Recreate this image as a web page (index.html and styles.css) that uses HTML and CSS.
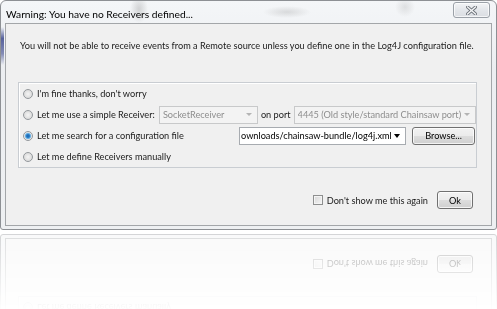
FILE: index.html
```html
<!DOCTYPE html>
<html>
<head>
<meta charset="utf-8">
<title>Warning</title>
<link rel="stylesheet" href="styles.css">
</head>
<body>
<div class="window">
  <div class="titlebar">
    <span class="title">Warning: You have no Receivers defined...</span>
    <button class="close" aria-label="Close">
      <svg width="11" height="9" viewBox="0 0 11 9">
        <path d="M1.5 1 L9.5 8 M9.5 1 L1.5 8" stroke="#6d737a" stroke-width="3.2" stroke-linecap="square" fill="none"/>
        <path d="M1.5 1 L9.5 8 M9.5 1 L1.5 8" stroke="#f4f5f6" stroke-width="1.4" stroke-linecap="square" fill="none"/>
      </svg>
    </button>
  </div>
  <div class="client">
    <p class="msg">You will not be able to receive events from a Remote source unless you define one in the Log4J configuration file.</p>
    <div class="group">
      <label class="row"><input type="radio" name="opt" class="radio"><span>I'm fine thanks, don't worry</span></label>
      <div class="row">
        <input type="radio" name="opt" class="radio"><span>Let me use a simple Receiver:</span>
        <div class="combo disabled receiver"><span class="val">SocketReceiver</span><span class="arrow"></span></div>
        <span class="onport">on port</span>
        <div class="combo disabled port"><span class="val">4445 (Old style/standard Chainsaw port)</span><span class="arrow"></span></div>
      </div>
      <div class="row">
        <input type="radio" name="opt" class="radio" checked><span>Let me search for a configuration file</span>
        <div class="combo file"><span class="val">ownloads/chainsaw-bundle/log4j.xml</span><span class="arrow"></span></div>
        <button class="btn browse">Browse...</button>
      </div>
      <label class="row"><input type="radio" name="opt" class="radio"><span>Let me define Receivers manually</span></label>
    </div>
    <div class="footer">
      <label class="check"><input type="checkbox" class="checkbox"><span>Don't show me this again</span></label>
      <button class="btn ok">Ok</button>
    </div>
  </div>
</div>
</body>
</html>
```

FILE: styles.css
```css
* { box-sizing: border-box; }
html, body { margin: 0; padding: 0; background: #ffffff; }
body {
  font-family: "Lato", "Open Sans", sans-serif;
  font-size: 9.2px;
  color: #1b1b1b;
  height: 309px;
  overflow: hidden;
}

.window {
  width: 497px;
  height: 230px;
  border: 1px solid #8d9094;
  border-radius: 6px 6px 3px 3px;
  padding: 0 4px 3px 4px;
  display: flex;
  flex-direction: column;
  background:
    radial-gradient(ellipse 9px 14px at 138px 8px, rgba(120,120,120,0.28), rgba(120,120,120,0) 100%),
    radial-gradient(ellipse 24px 6px at 286px 11px, rgba(120,120,120,0.22), rgba(120,120,120,0) 100%),
    radial-gradient(ellipse 10px 10px at 404px 6px, rgba(120,120,120,0.18), rgba(120,120,120,0) 100%),
    linear-gradient(to bottom, rgba(60,72,140,0), rgba(60,72,140,0.85) 30%, rgba(60,72,140,0.6) 70%, rgba(60,72,140,0)) 0 26px / 3px 38px no-repeat,
    linear-gradient(to bottom, #f4f6f8, #eceef1 30%, #eef0f2);
  -webkit-box-reflect: below 4px linear-gradient(to bottom, transparent 66%, rgba(255,255,255,0.38));
}

.titlebar {
  height: 22px;
  display: flex;
  align-items: flex-start;
  flex: none;
}
.title {
  padding: 6px 0 0 1px;
  line-height: 15px;
  font-size: 10.25px;
  color: #000;
}
.close {
  margin: 1px 2px 0 auto;
  width: 37px;
  height: 16px;
  border: 1px solid #9ba1a8;
  border-radius: 3px;
  background: linear-gradient(to bottom, #f3f4f6, #e3e6ea 50%, #dadde2);
  box-shadow: inset 0 0 0 1px rgba(255,255,255,0.7);
  display: flex;
  align-items: center;
  justify-content: center;
  padding: 0;
}

.client {
  flex: 1;
  border: 1px solid #a3a6a9;
  background: #f0f0f0;
  display: flex;
  flex-direction: column;
}

.msg {
  margin: 0;
  padding: 14px 0 0 14px;
  line-height: 15px;
  white-space: nowrap;
}

.group {
  margin: 29px 14px 0 12px;
  border: 1px solid #c9cdd2;
  box-shadow: inset 1px 1px 0 #ffffff;
  display: flex;
  flex-direction: column;
}
.row {
  height: 21px;
  display: flex;
  align-items: center;
  padding-left: 4px;
  white-space: nowrap;
}

.radio {
  appearance: none;
  -webkit-appearance: none;
  margin: 0 4px 0 0;
  width: 10px;
  height: 10px;
  border-radius: 50%;
  border: 1px solid #94989c;
  background: radial-gradient(circle at 50% 50%, #f4f4f4 0, #dcdcdc 70%, #e8e8e8 100%);
  flex: none;
}
.radio:checked {
  background: radial-gradient(circle at 50% 50%, #1f5fa6 0, #2a7fc8 1.6px, #7cbbe8 2.8px, #e8e8e8 3.6px, #f4f4f4 100%);
}

.combo {
  height: 18px;
  border: 1px solid #c8c9ca;
  display: flex;
  align-items: center;
  padding-left: 3px;
  background: #f3f3f3;
  overflow: hidden;
  flex: none;
}
.combo .val { flex: 1; overflow: hidden; white-space: nowrap; }
.combo .arrow {
  width: 0;
  height: 0;
  border-left: 3px solid transparent;
  border-right: 3px solid transparent;
  border-top: 3px solid #b4b4b4;
  margin: 0 5px 0 3px;
  flex: none;
}
.combo.disabled { color: #8e8e8e; }
.receiver { width: 99px; margin-left: 4px; }
.onport { margin: 0 3px 0 3px; }
.port { flex: 1; margin-right: 0; }

.combo.file {
  width: 167px;
  margin-left: auto;
  background: #ffffff;
  border-color: #a7abb0;
  color: #000;
  padding-left: 1px;
}
.combo.file .arrow {
  border-top: 4px solid #000;
  border-left-width: 3.5px;
  border-right-width: 3.5px;
  margin: 0 5px 0 2px;
}

.btn {
  font-family: inherit;
  font-size: 9.2px;
  color: #000;
  height: 18px;
  padding: 0;
  border: 1px solid #707070;
  border-radius: 3px;
  background: linear-gradient(to bottom, #f2f2f2, #ebebeb 50%, #dddddd 51%, #cfcfcf);
  box-shadow: inset 0 0 0 1px rgba(255,255,255,0.75);
}
.browse { width: 63px; margin: 0 1px 0 6px; flex: none; }

.footer {
  margin: 23px 18px 0 0;
  display: flex;
  align-items: center;
  justify-content: flex-end;
}
.check {
  display: flex;
  align-items: center;
  margin-right: 9px;
}
.checkbox {
  appearance: none;
  -webkit-appearance: none;
  width: 10px;
  height: 10px;
  margin: 0 4px 0 0;
  border: 1px solid #8e8f8f;
  background: linear-gradient(135deg, #d6d6d6, #f6f6f6);
  box-shadow: inset 0 0 0 1px #f4f4f4;
}
.ok { width: 36px; }
```
